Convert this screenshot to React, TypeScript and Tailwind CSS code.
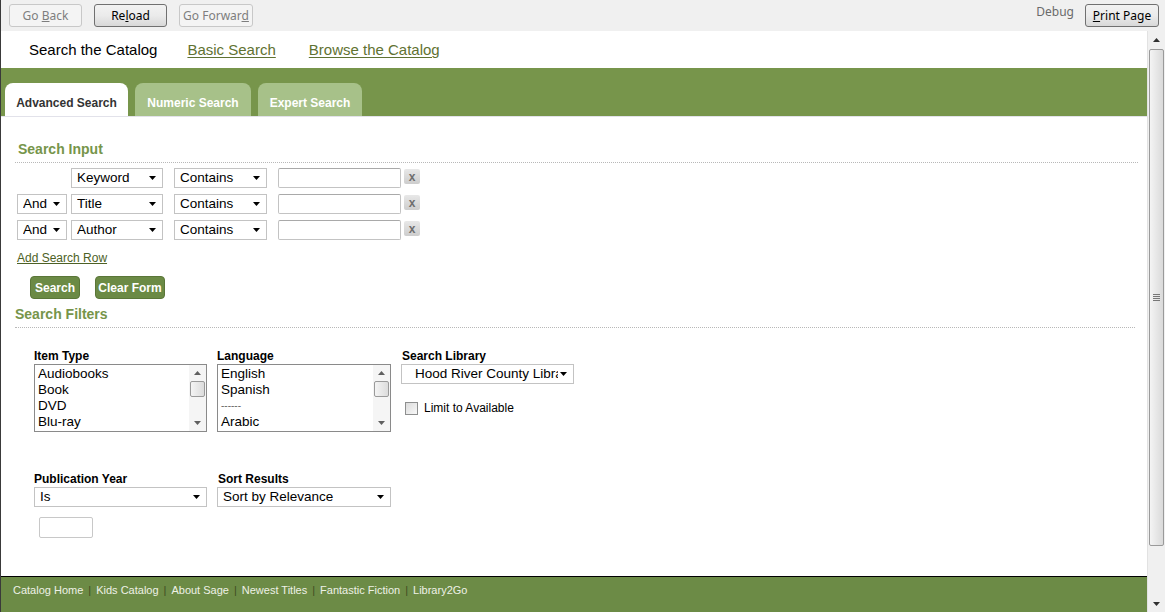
import React from "react";

const arial = { fontFamily: '"Liberation Sans", Arial, sans-serif' };
const ui = { fontFamily: '"Noto Sans", "Open Sans", sans-serif' };

function Arrow() {
  return (
    <svg width="7" height="4" viewBox="0 0 7 4" className="shrink-0">
      <path d="M0 0 H7 L3.5 4 Z" fill="#000" />
    </svg>
  );
}

function Select({ text, w, pl = 5 }: { text: string; w: number; pl?: number }) {
  return (
    <div
      className="h-[20px] border border-[#c3c3c3] bg-white flex items-center pr-[6px] text-[13.5px] text-black shrink-0"
      style={{ width: w, paddingLeft: pl }}
    >
      <span className="flex-1 mr-[2px] overflow-hidden whitespace-nowrap leading-[18px]">{text}</span>
      <Arrow />
    </div>
  );
}

function XBtn() {
  return (
    <div className="mt-[1px] self-start w-[16px] h-[15px] rounded-[2px] bg-gradient-to-b from-[#e8e8e8] to-[#cdcdcd] flex items-center justify-center text-[#6e6e6e] text-[12px] font-bold leading-none">
      x
    </div>
  );
}

function SearchRow({ first, field }: { first?: boolean; field: string }) {
  return (
    <div className="flex items-start h-[20px] ml-[2px]">
      {first ? <div className="w-[50px] shrink-0" /> : <Select text="And" w={50} />}
      <div className="ml-[4px]"><Select text={field} w={92} /></div>
      <div className="ml-[11px]"><Select text="Contains" w={93} /></div>
      <div className="ml-[11px] w-[123px] h-[20px] border border-[#c3c3c3] border-t-[#a9a9a9] rounded-[2px] bg-white" />
      <div className="ml-[3px]"><XBtn /></div>
    </div>
  );
}

function ListBox({ items, w }: { items: string[]; w: number }) {
  return (
    <div className="h-[68px] border border-[#8a8a8a] bg-white flex" style={{ width: w }}>
      <div className="flex-1 pl-[3px] pt-[1px] text-[13.5px] leading-[16px] text-black overflow-hidden">
        {items.map((it) => (
          <div key={it} className={it.startsWith("-") ? "text-[#666] text-[10px] leading-[16px]" : ""}>
            {it}
          </div>
        ))}
      </div>
      <div className="w-[17px] bg-[#f5f5f5] flex flex-col items-center">
        <div className="h-[16px] flex items-center justify-center">
          <svg width="7" height="4" viewBox="0 0 7 4"><path d="M0 4 H7 L3.5 0 Z" fill="#606060" /></svg>
        </div>
        <div className="w-[15px] h-[16px] border border-[#9a9a9a] rounded-[2px] bg-gradient-to-r from-[#f4f4f4] to-[#dcdcdc]" />
        <div className="flex-1" />
        <div className="h-[16px] flex items-center justify-center">
          <svg width="7" height="4" viewBox="0 0 7 4"><path d="M0 0 H7 L3.5 4 Z" fill="#606060" /></svg>
        </div>
      </div>
    </div>
  );
}

function Label({ children }: { children: React.ReactNode }) {
  return <div className="text-[12px] font-bold leading-[14px] text-black">{children}</div>;
}

function ToolBtn({ children, enabled, w }: { children: React.ReactNode; enabled?: boolean; w: number }) {
  return (
    <div
      className={
        "h-[23px] rounded-[3px] flex items-center justify-center text-[12px] border " +
        (enabled
          ? "border-[#707070] bg-gradient-to-b from-[#f2f2f2] via-[#ebebeb] to-[#d8d8d8] text-black"
          : "border-[#c8c8c8] bg-[#f4f4f4] text-[#7e7e7e]")
      }
      style={{ width: w, ...ui }}
    >
      <span>{children}</span>
    </div>
  );
}

export default function App() {
  const footer = ["Catalog Home", "Kids Catalog", "About Sage", "Newest Titles", "Fantastic Fiction", "Library2Go"];
  return (
    <div className="w-[1165px] h-[612px] flex flex-col border-l border-[#3a3a3a] overflow-hidden bg-white" style={arial}>
      {/* toolbar */}
      <div className="h-[31px] shrink-0 bg-[#f0f0f0] flex items-center pl-[8px] pr-[6px]">
        <ToolBtn w={73}>Go <u>B</u>ack</ToolBtn>
        <div className="ml-[12px]"><ToolBtn enabled w={73}>Re<u>l</u>oad</ToolBtn></div>
        <div className="ml-[12px]"><ToolBtn w={74}>Go Forwar<u>d</u></ToolBtn></div>
        <div className="ml-auto self-start pt-[3px] text-[12px] text-[#6a6a6a]" style={ui}>Debug</div>
        <div className="ml-[11px]"><ToolBtn enabled w={74}><u>P</u>rint Page</ToolBtn></div>
      </div>

      <div className="flex-1 flex min-h-0">
        {/* content */}
        <div className="flex-1 flex flex-col min-w-0">
          {/* nav */}
          <div className="h-[37px] shrink-0 flex items-center pt-[2px] pl-[28px] text-[15px]">
            <span className="text-black">Search the Catalog</span>
            <span className="ml-[30px] text-[#5f7232] underline underline-offset-2">Basic Search</span>
            <span className="ml-[33px] text-[#5f7232] underline underline-offset-2">Browse the Catalog</span>
          </div>
          {/* tabs band */}
          <div className="h-[48px] shrink-0 bg-[#77954b] flex items-end pl-[4px] gap-[7px]">
            <div className="h-[33px] w-[123px] bg-white rounded-t-[8px] flex items-start justify-center pt-[13px] leading-[14px] text-[12px] font-bold text-[#333]">
              Advanced Search
            </div>
            <div className="h-[33px] w-[116px] bg-[#a7c189] rounded-t-[8px] flex items-start justify-center pt-[13px] leading-[14px] text-[12px] font-bold text-white">
              Numeric Search
            </div>
            <div className="h-[33px] w-[104px] bg-[#a7c189] rounded-t-[8px] flex items-start justify-center pt-[13px] leading-[14px] text-[12px] font-bold text-white">
              Expert Search
            </div>
          </div>
          <div className="h-[1px] shrink-0 bg-[#e2e2ea]" />

          {/* main */}
          <div className="flex-1 pl-[14px] pr-[9px] pt-[24px]">
            <div className="pl-[3px] pb-[5px] border-b border-dotted border-[#b8b8b8] text-[14px] leading-[16px] font-bold text-[#76954a]">
              Search Input
            </div>
            <div className="mt-[5px] flex flex-col gap-[6px]">
              <SearchRow first field="Keyword" />
              <SearchRow field="Title" />
              <SearchRow field="Author" />
            </div>
            <div className="mt-[11px] ml-[2px] text-[12px] leading-[14px] text-[#4d6125] underline underline-offset-1">Add Search Row</div>
            <div className="mt-[11px] ml-[15px] flex gap-[15px]">
              <div className="h-[23px] w-[50px] rounded-[4px] bg-[#6b8a45] border border-[#5a7638] flex items-center justify-center text-white text-[12px] font-bold">
                Search
              </div>
              <div className="h-[23px] w-[70px] rounded-[4px] bg-[#6b8a45] border border-[#5a7638] flex items-center justify-center text-white text-[12px] font-bold">
                Clear Form
              </div>
            </div>
            <div className="mt-[7px] mr-[3px] pb-[5px] border-b border-dotted border-[#b8b8b8] text-[14px] leading-[16px] font-bold text-[#76954a]">
              Search Filters
            </div>

            <div className="ml-[19px] mt-[21px] flex gap-[10px]">
              <div className="w-[173px]">
                <Label>Item Type</Label>
                <div className="mt-[1px]"><ListBox w={173} items={["Audiobooks", "Book", "DVD", "Blu-ray"]} /></div>
              </div>
              <div className="w-[174px]">
                <Label>Language</Label>
                <div className="mt-[1px]"><ListBox w={174} items={["English", "Spanish", "------", "Arabic"]} /></div>
              </div>
              <div className="w-[173px]">
                <div className="pl-[1px]"><Label>Search Library</Label></div>
                <div className="mt-[1px]"><Select text="Hood River County Library" w={173} pl={13} /></div>
                <div className="mt-[15px] ml-[4px] flex items-center gap-[6px]">
                  <div className="w-[13px] h-[13px] border border-[#8e8f8f] bg-gradient-to-br from-[#dcdcdc] to-[#f8f8f8]" />
                  <span className="text-[12px] text-black">Limit to Available</span>
                </div>
              </div>
            </div>

            <div className="ml-[19px] mt-[40px] flex gap-[10px]">
              <div className="w-[173px]">
                <Label>Publication Year</Label>
                <div className="mt-[1px]"><Select text="Is" w={173} /></div>
                <div className="mt-[10px] ml-[5px] w-[54px] h-[21px] border border-[#c8c8c8] rounded-[2px] bg-white" />
              </div>
              <div className="w-[174px]">
                <div className="pl-[1px]"><Label>Sort Results</Label></div>
                <div className="mt-[1px]"><Select text="Sort by Relevance" w={174} /></div>
              </div>
            </div>
          </div>

          {/* footer */}
          <div className="h-[36px] shrink-0 border-t border-black bg-[#6c8b46] flex items-center pl-[12px] pb-[8px] text-[11px] gap-[5px]">
            {footer.map((f, i) => (
              <React.Fragment key={f}>
                {i > 0 && <span className="text-[#3f4d22]">|</span>}
                <span className="text-[#eef1e6]">{f}</span>
              </React.Fragment>
            ))}
          </div>
        </div>

        {/* page scrollbar */}
        <div className="w-[18px] shrink-0 bg-[#f0f0f0] border-l border-[#e2e2e2] flex flex-col items-center">
          <div className="h-[17px] w-full flex items-center justify-center">
            <svg width="7" height="4" viewBox="0 0 7 4"><path d="M0 4 H7 L3.5 0 Z" fill="#303030" /></svg>
          </div>
          <div className="mt-[1px] w-[15px] h-[497px] border border-[#9a9a9a] rounded-[2px] bg-gradient-to-r from-[#f4f4f4] to-[#dadada] flex items-center justify-center">
            <div className="flex flex-col gap-[1px]">
              <div className="w-[7px] h-[1px] bg-[#777]" />
              <div className="w-[7px] h-[1px] bg-[#777]" />
              <div className="w-[7px] h-[1px] bg-[#777]" />
              <div className="w-[7px] h-[1px] bg-[#777]" />
            </div>
          </div>
          <div className="flex-1" />
          <div className="h-[17px] w-full flex items-center justify-center">
            <svg width="7" height="4" viewBox="0 0 7 4"><path d="M0 0 H7 L3.5 4 Z" fill="#303030" /></svg>
          </div>
        </div>
      </div>
    </div>
  );
}
